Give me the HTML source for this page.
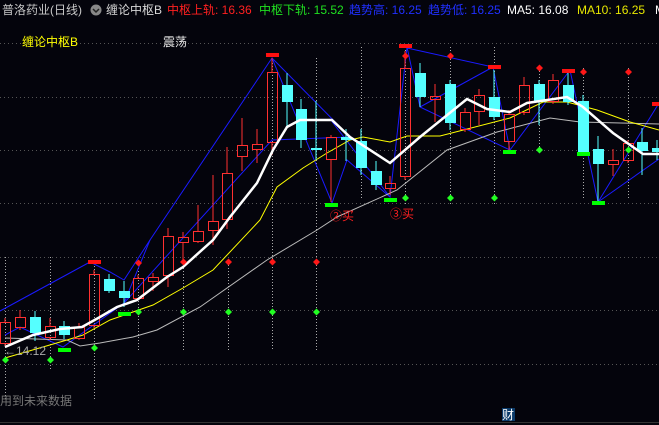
<!DOCTYPE html>
<html><head><meta charset="utf-8"><style>
html,body{margin:0;padding:0;background:#04040c;width:659px;height:425px;overflow:hidden}
svg{display:block}
text{font-family:"Liberation Sans","Noto Sans CJK SC",sans-serif;font-size:12px}
</style></head><body>
<svg id="s" width="659" height="425" xmlns="http://www.w3.org/2000/svg">
<rect width="659" height="425" fill="#04040c"/>
<g id="grid" stroke="#555" stroke-width="1" stroke-dasharray="1 3"></g>
<g id="vl" stroke="#aaa" stroke-width="1" stroke-dasharray="1 2"></g>
<line x1="0" y1="422.5" x2="659" y2="422.5" stroke="#333"/>
<g fill="none" stroke="#1a1aff" stroke-width="1">
<polyline points="0,311 90,262 110,272 124,280 150,240 272,58 332,203 347,160 390,197 407,47 420,107 510,150 570,70 598,202 659,103"/>
<polyline points="5,335 20,327 63,347 124,303 150,240"/>
<polyline points="124,303 272,140 350,137"/>
<polyline points="272,58 350,137"/>
<polyline points="407,48 493,67 510,150"/>
<polyline points="420,107 493,67"/>
<polyline points="598,202 659,159"/>
<polyline points="330,119 390,197"/>
</g>
<polyline fill="none" stroke="#bbb" stroke-width="1" points="5,338 67,340 80,346 100,343 133,337 157,330 200,307 267,260 317,230 337,217 397,190 447,150 497,132 550,118 580,122 659,124"/>
<polyline fill="none" stroke="#ffff00" stroke-width="1" points="5,358 67,340 83,335 110,320 153,305 183,288 213,270 260,220 277,187 303,168 327,153 350,140 363,137 390,142 407,136 440,136 510,118 543,102 567,102 597,110 630,122 659,130"/>
<g id="c"></g>
<polyline fill="none" stroke="#fff" stroke-width="2.5" points="5,347 33,335 60,329 82,327 100,317 117,307 137,300 167,277 183,267 213,240 230,217 257,183 273,150 287,127 300,120 332,120 350,137 390,163 420,137 467,99 487,109 510,112 527,103 567,97 583,107 613,133 643,154 659,154"/>
<g id="m"></g>
<rect x="0" y="0" width="659" height="17" fill="#04040c"/>
<text x="2" y="14" fill="#c8c8c8">普洛药业(日线)</text>
<circle cx="96" cy="10" r="5.5" fill="#888"/>
<polyline points="93,9 96,12 99,9" fill="none" stroke="#222" stroke-width="1.5"/>
<text x="106" y="14" fill="#d8d8d8">缠论中枢B</text>
<text x="167" y="14" fill="#ff2020">中枢上轨: 16.36</text>
<text x="259" y="14" fill="#20e020">中枢下轨: 15.52</text>
<text x="349" y="14" fill="#2030ff">趋势高: 16.25</text>
<text x="428" y="14" fill="#2030ff">趋势低: 16.25</text>
<text x="507" y="14" fill="#ffffff">MA5: 16.08</text>
<text x="577" y="14" fill="#e8e800">MA10: 16.25</text>
<text x="655" y="14" fill="#fff">M</text>
<text x="22" y="46" fill="#ffff00">缠论中枢B</text>
<text x="163" y="46" fill="#e8e8e8">震荡</text>
<text x="330" y="220" fill="#ff2020">②买</text>
<text x="390" y="218" fill="#ff2020">③买</text>
<text x="4" y="355" fill="#aaa">←14.12</text>
<text x="0" y="405" fill="#777">用到未来数据</text>
<rect x="502" y="408" width="13" height="13" fill="#0a3a6a"/>
<text x="502" y="419" fill="#fff">财</text>
</svg>
<script>
var N="http://www.w3.org/2000/svg";
function el(p,t,a){var e=document.createElementNS(N,t);for(var k in a)e.setAttribute(k,a[k]);document.getElementById(p).appendChild(e);return e;}
[43,97,150,203,257,310,364].forEach(function(y){el('grid','line',{x1:0,x2:659,y1:y+.5,y2:y+.5});});
[[5,257,400],[50,257,370],[94,260,400],[138,262,350],[183,262,350],[228,262,350],[272,60,350],[316,58,350],[361,47,200],[405,47,205],[450,47,205],[494,47,205],[539,68,150],[583,68,200],[628,68,200]].forEach(function(v){el('vl','line',{x1:v[0]+.5,x2:v[0]+.5,y1:v[1],y2:v[2]});});
var C=[[0,'r',322,343,318,346],[15,'r',317,327,310,330],[30,'c',317,333,311,341],[45,'r',326,337,318,340],[59,'c',326,335,321,339],[74,'r',327,338,323,340],[89,'r',274,325,270,328],[104,'c',279,291,274,293],[119,'c',291,298,281,307],[133,'r',278,298,275,300],[148,'r',277,281,273,291],[163,'r',236,275,228,287],[178,'r',237,242,232,262],[193,'r',231,241,205,243],[208,'r',221,230,175,245],[222,'r',173,219,147,229],[237,'r',145,156,118,171],[252,'r',144,149,129,163],[267,'r',72,142,58,155],[282,'c',85,102,73,128],[296,'c',109,140,99,148],[311,'c',148,150,101,160],[326,'r',137,159,135,202],[341,'c',137,140,129,161],[356,'c',141,168,129,175],[371,'c',171,185,161,190],[385,'r',183,188,176,195],[400,'r',68,176,51,180],[415,'c',73,97,63,107],[430,'r',96,99,84,122],[445,'c',84,123,80,130],[460,'r',112,129,108,132],[474,'r',95,111,89,125],[489,'c',97,117,70,120],[504,'r',114,141,110,150],[519,'r',85,112,77,115],[534,'c',84,102,80,125],[548,'r',80,101,74,104],[563,'c',85,102,70,105],[578,'c',101,152,95,155],[593,'c',149,164,136,201],[608,'r',160,164,149,176],[623,'r',143,160,140,163],[637,'c',142,151,128,175],[652,'c',148,152,140,160]];
C.forEach(function(c){var x=c[0],w=10,col=c[1]=='r'?'#ff3030':'#55ffff',cx=x+w/2;
el('c','line',{x1:cx,x2:cx,y1:c[4],y2:c[2],stroke:col});
el('c','line',{x1:cx,x2:cx,y1:c[3],y2:c[5],stroke:col});
if(c[1]=='r')el('c','rect',{x:x+.5,y:c[2]+.5,width:w,height:Math.max(1,c[3]-c[2]),fill:'none',stroke:col});
else el('c','rect',{x:x,y:c[2],width:w+1,height:Math.max(2,c[3]-c[2]),fill:col});});
[[88,260],[266,53],[399,44],[488,65],[562,69],[652,102]].forEach(function(b){el('m','rect',{x:b[0],y:b[1],width:13,height:4,fill:'#ff1010'});});
[[58,348],[118,312],[325,203],[384,198],[503,150],[577,152],[592,201]].forEach(function(b){el('m','rect',{x:b[0],y:b[1],width:13,height:4,fill:'#00ff00'});});
function dia(x,y,c){el('m','polygon',{points:(x+.5)+','+(y-3.5)+' '+(x+4)+','+y+' '+(x+.5)+','+(y+3.5)+' '+(x-3)+','+y,fill:c});}
[[138,263],[183,262],[228,262],[272,262],[316,262],[405,56],[450,56],[539,68],[583,72],[628,72]].forEach(function(d){dia(d[0],d[1],'#ff1818');});
[[5,360],[50,360],[94,348],[138,312],[183,312],[228,312],[272,312],[316,312],[405,198],[450,198],[494,198],[539,150],[628,150]].forEach(function(d){dia(d[0],d[1],'#22ff22');});
</script>
</body></html>
